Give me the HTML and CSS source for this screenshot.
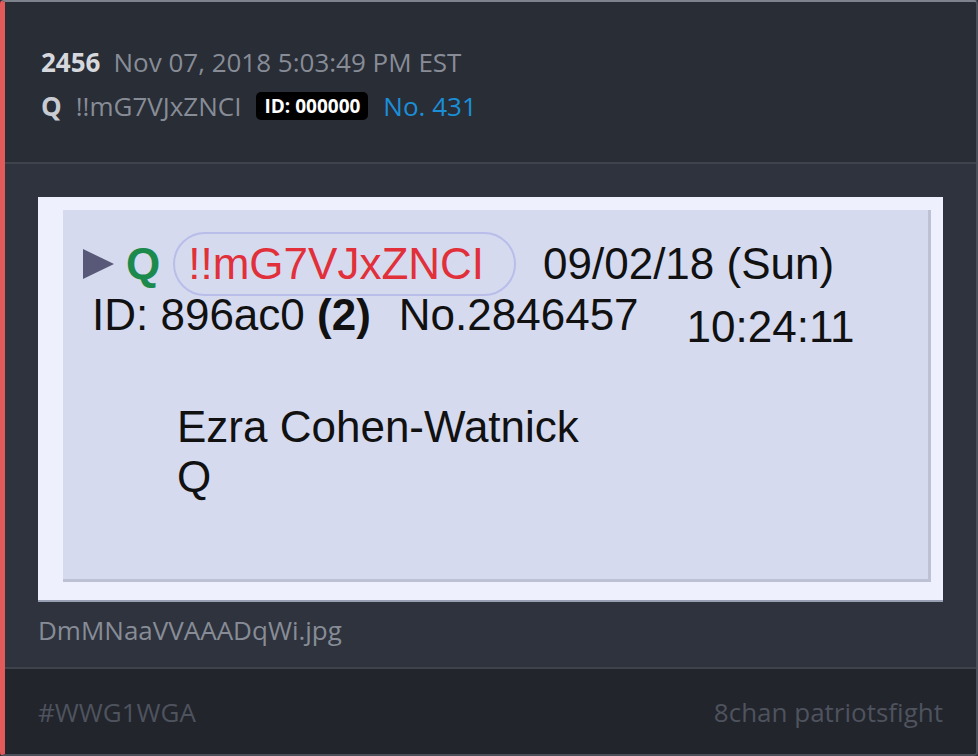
FILE: index.html
```html
<!DOCTYPE html>
<html>
<head>
<meta charset="utf-8">
<link rel="stylesheet" href="styles.css">
</head>
<body>
<article class="post">
  <header class="post-head">
    <div class="line">
      <span class="num">2456</span>
      <span class="date">Nov 07, 2018 5:03:49 PM EST</span>
    </div>
    <div class="line">
      <span class="author">Q</span>
      <span class="trip">!!mG7VJxZNCI</span>
      <span class="badge">ID: 000000</span>
      <span class="no">No. 431</span>
    </div>
  </header>
  <section class="post-body">
    <div class="shot">
      <div class="panel">
        <div class="row1">
          <svg class="arrow" width="32" height="32" viewBox="0 0 32 32"><polygon points="0,1 31,16 0,31" fill="#585878"/></svg>
          <span class="q">Q</span>
          <span class="pill">!!mG7VJxZNCI</span>
          <span class="pdate">09/02/18 (Sun)</span>
        </div>
        <div class="row2">
          <span class="pid">ID: 896ac0 <b>(2)</b></span>
          <span class="pno">No.2846457</span>
          <span class="ptime">10:24:11</span>
        </div>
        <div class="msg">
          <div>Ezra Cohen-Watnick</div>
          <div>Q</div>
        </div>
      </div>
    </div>
    <div class="fname">DmMNaaVVAAADqWi.jpg</div>
  </section>
  <footer class="post-foot">
    <span class="tag">#WWG1WGA</span>
    <span class="src">8chan patriotsfight</span>
  </footer>
</article>
</body>
</html>
```

FILE: styles.css
```css
html, body {
  margin: 0;
  padding: 0;
  background: #2a2e37;
}
body {
  font-family: "Open Sans", "Noto Sans", sans-serif;
}
.post {
  box-sizing: border-box;
  width: 978px;
  height: 756px;
  border: 2px solid #4a4f59;
  border-top-color: #7d828c;
  border-left: 5px solid #e35a5a;
  border-radius: 4px;
  overflow: hidden;
  display: flex;
  flex-direction: column;
  background: #2e333d;
}
.post-head {
  background: #292d36;
  height: 162px;
  flex: none;
  box-sizing: border-box;
  padding: 38px 0 0 36px;
  border-bottom: 2px solid #3f434c;
}
.line {
  display: flex;
  align-items: center;
  height: 44px;
  font-size: 26px;
  line-height: 44px;
}
.num {
  font-weight: 700;
  color: #d6d8dd;
  margin-right: 13px;
}
.date { color: #878c97; }
.author {
  font-weight: 700;
  color: #c8cbd1;
  margin-right: 14px;
}
.trip {
  color: #878c97;
  margin-right: 15px;
}
.badge {
  background: #000;
  color: #fff;
  font-weight: 700;
  font-size: 19px;
  line-height: 28px;
  height: 28px;
  padding: 0 8px;
  border-radius: 5px;
  margin-right: 15px;
}
.no { color: #1a8fd8; }

.post-body {
  height: 503px;
  flex: none;
  box-sizing: border-box;
  padding: 33px 33px 0 33px;
}
.shot {
  background: #eef1fd;
  padding: 13px 12px 18px 25px;
  border-bottom: 2px solid #9aa0b4;
  height: 405px;
  box-sizing: border-box;
}
.panel {
  height: 372px;
  box-sizing: border-box;
  background: #d5daef;
  border-right: 3px solid #bcc1d4;
  border-bottom: 3px solid #bcc1d4;
  padding: 22px 0 0 20px;
  font-family: "Liberation Sans", Arial, sans-serif;
  font-size: 44px;
  color: #111;
}
.row1 {
  display: flex;
  align-items: center;
  height: 64px;
}
.arrow { margin-right: 11px; }
.q {
  color: #1b8a4c;
  font-weight: 700;
  margin-right: 13px;
}
.pill {
  color: #e2303a;
  border: 2px solid #b9bde9;
  border-radius: 32px;
  height: 64px;
  box-sizing: border-box;
  line-height: 60px;
  padding: 0 30px 0 13px;
  margin-right: 27px;
}
.row2 {
  display: flex;
  align-items: flex-start;
  margin: -5px 0 0 9px;
  line-height: 48px;
  height: 111px;
}
.pid { margin-right: 28px; }
.pno { margin-right: 48px; }
.ptime { margin-top: 12px; }
.msg {
  margin-left: 94px;
  line-height: 50px;
}

.fname {
  color: #878c97;
  font-size: 26px;
  line-height: 56px;
}
.post-foot {
  flex: 1;
  background: #22252c;
  border-top: 2px solid #3f434c;
  display: flex;
  justify-content: space-between;
  align-items: center;
  padding: 0 33px;
  font-size: 26px;
  color: #4e535e;
}
```
